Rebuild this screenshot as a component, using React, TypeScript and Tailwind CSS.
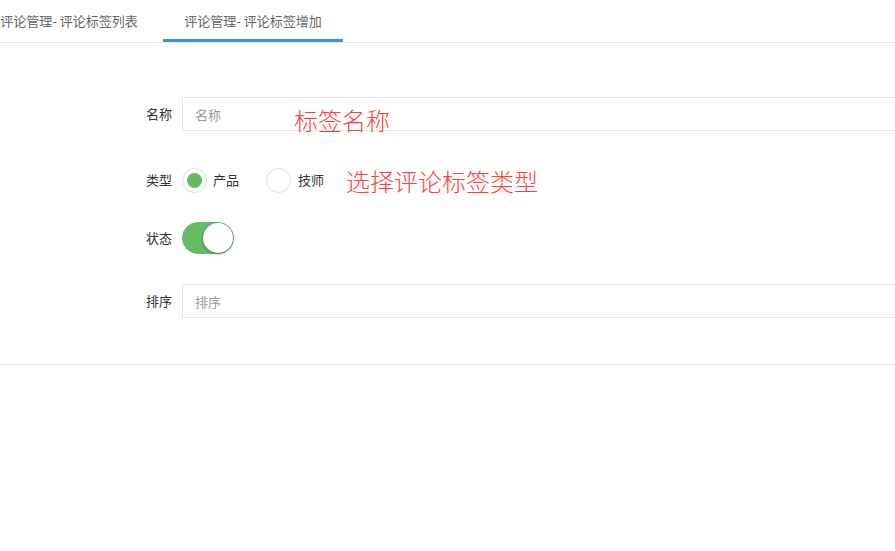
import { useState } from "react";

export default function App() {
  const [type, setType] = useState<string>("product");
  const [on, setOn] = useState<boolean>(true);

  return (
    <main
      className="relative w-full h-[551px] overflow-hidden bg-white text-[13px] text-[#333]"
      style={{ fontFamily: '"Noto Sans CJK SC", "Noto Sans", sans-serif' }}
    >
      <nav className="flex gap-[4px] -ml-[21px] h-[43px] border-b border-[#e8e8e8]">
        <div className="w-[180px] h-[42px] flex items-center justify-center text-[#666] whitespace-nowrap">
          评论管理- 评论标签列表
        </div>
        <div className="w-[180px] h-[42px] flex items-center justify-center text-[#666] whitespace-nowrap border-b-[3px] border-[#3a8ee6] pt-[3px]">
          评论管理- 评论标签增加
        </div>
      </nav>

      <form className="flex flex-col pt-[54px] border-b border-[#e8e8e8] pb-[46px]">
        <div className="flex items-center h-[34px]">
          <label className="shrink-0 w-[182px] pr-[10px] text-right">名称</label>
          <input
            placeholder="名称"
            className="shrink-0 w-[760px] h-[34px] border border-[#e5e5e5] px-3 outline-none placeholder:text-[#999]"
          />
        </div>

        <div className="flex items-center h-[34px] mt-[32px]">
          <label className="shrink-0 w-[182px] pr-[10px] text-right">类型</label>
          <button
            type="button"
            onClick={() => setType("product")}
            className="flex items-center"
          >
            <span className="w-[25px] h-[25px] rounded-full border border-[#dedede] flex items-center justify-center">
              {type === "product" && (
                <span className="w-[15px] h-[15px] rounded-full bg-[#62bb62]" />
              )}
            </span>
            <span className="ml-[6px]">产品</span>
          </button>
          <button
            type="button"
            onClick={() => setType("tech")}
            className="flex items-center ml-[27px]"
          >
            <span className="w-[25px] h-[25px] rounded-full border border-[#dedede] flex items-center justify-center">
              {type === "tech" && (
                <span className="w-[15px] h-[15px] rounded-full bg-[#62bb62]" />
              )}
            </span>
            <span className="ml-[7px]">技师</span>
          </button>
        </div>

        <div className="flex items-center h-[34px] mt-[24px]">
          <label className="shrink-0 w-[182px] pr-[10px] text-right">状态</label>
          <button
            type="button"
            onClick={() => setOn(!on)}
            className={
              on
                ? "relative shrink-0 w-[52px] h-[32px] rounded-full bg-[#64bd63] border border-[#64bd63]"
                : "relative shrink-0 w-[52px] h-[32px] rounded-full bg-white border border-[#dfdfdf]"
            }
          >
            <span
              className={
                on
                  ? "absolute top-0 right-0 w-[30px] h-[30px] rounded-full bg-white shadow-[0_1px_3px_rgba(0,0,0,0.4)]"
                  : "absolute top-0 left-0 w-[30px] h-[30px] rounded-full bg-white shadow-[0_1px_3px_rgba(0,0,0,0.4)]"
              }
            />
          </button>
        </div>

        <div className="flex items-center h-[34px] mt-[29px]">
          <label className="shrink-0 w-[182px] pr-[10px] text-right">排序</label>
          <input
            placeholder="排序"
            className="shrink-0 w-[760px] h-[34px] border border-[#e5e5e5] px-3 outline-none placeholder:text-[#999]"
          />
        </div>
      </form>

      {/* red annotations laid over the screenshot */}
      <span className="absolute left-[294px] top-[104px] text-[24px] leading-[32px] font-light text-[#ff3d3d] whitespace-nowrap">
        标签名称
      </span>
      <span className="absolute left-[346px] top-[165px] text-[24px] leading-[32px] font-light text-[#ff3d3d] whitespace-nowrap">
        选择评论标签类型
      </span>
    </main>
  );
}
